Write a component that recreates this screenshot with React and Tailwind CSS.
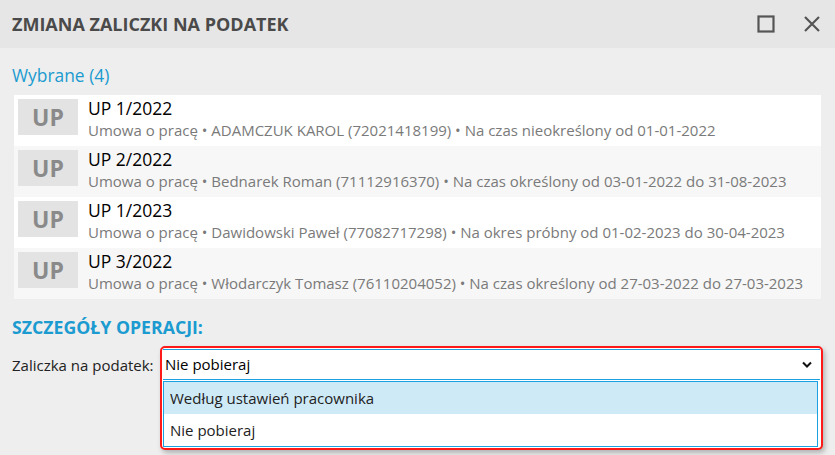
import React from "react";

const rows = [
  { t: "UP 1/2022", s: "Umowa o pracę • ADAMCZUK KAROL (72021418199) • Na czas nieokreślony od 01-01-2022", bg: "bg-white" },
  { t: "UP 2/2022", s: "Umowa o pracę • Bednarek Roman (71112916370) • Na czas określony od 03-01-2022 do 31-08-2023", bg: "bg-[#f7f7f7]" },
  { t: "UP 1/2023", s: "Umowa o pracę • Dawidowski Paweł (77082717298) • Na okres próbny od 01-02-2023 do 30-04-2023", bg: "bg-white" },
  { t: "UP 3/2022", s: "Umowa o pracę • Włodarczyk Tomasz (76110204052) • Na czas określony od 27-03-2022 do 27-03-2023", bg: "bg-[#f7f7f7]" },
];

export default function App() {
  return (
    <div className="w-[835px] h-[455px] overflow-hidden bg-[#eeeeee] font-['Open_Sans',sans-serif] relative">
      <div className="h-[48px] bg-[#e6e6e6] flex items-center justify-between pl-[12px] pr-[14px]">
        <div className="text-[18px] font-bold text-[#4a4a4a] whitespace-nowrap">
          ZMIANA ZALICZKI NA PODATEK
        </div>
        <div className="flex items-center gap-[28px]">
          <svg width="18" height="18" viewBox="0 0 18 18"><rect x="1.5" y="1.5" width="15" height="15" fill="none" stroke="#555" strokeWidth="2.2" /></svg>
          <svg width="18" height="18" viewBox="0 0 18 18"><path d="M2 2 L16 16 M16 2 L2 16" stroke="#555" strokeWidth="2.2" /></svg>
        </div>
      </div>
      <div className="px-[12px] pt-[16px]">
        <div className="text-[17.4px] font-normal text-[#1b9bd0] leading-[22px] w-fit whitespace-nowrap">Wybrane (4)</div>
        <div className="mt-[9px] ml-[2px] w-[807px] flex flex-col">
          {rows.map((r, i) => (
            <div key={i} className={`${r.bg} h-[51px] flex items-start pl-[4px] pt-[4px]`}>
              <div className="w-[60px] h-[36px] bg-[#e3e3e3] flex items-center justify-center text-[23px] font-bold text-[#8a8a8a] shrink-0">UP</div>
              <div className="ml-[10px] flex flex-col">
                <div className="text-[17.5px] leading-[20px] text-black -mt-[1px]">{r.t}</div>
                <div className="text-[15px] leading-[20px] text-[#7a7a7a] mt-[2px] whitespace-nowrap">{r.s}</div>
              </div>
            </div>
          ))}
        </div>
        <div className="mt-[17px] text-[17.7px] font-bold text-[#1b9bd0] leading-[22px] whitespace-nowrap">SZCZEGÓŁY OPERACJI:</div>
        <div className="mt-[8px] flex items-start">
          <div className="text-[15px] text-[#222] leading-[20px] w-[148px] pt-[9px] whitespace-nowrap">Zaliczka na podatek:</div>
          <div className="w-[663px] h-[104px] border-2 border-[#ff1a1a] rounded-[5px] p-[1px] shadow-[2px_3px_5px_rgba(0,0,0,0.25)] bg-white flex flex-col">
            <div className="h-[31px] border-y border-[#1ba1e2] bg-white flex items-center justify-between pl-[2px] pr-[8px]">
              <span className="text-[15px] text-black">Nie pobieraj</span>
              <svg width="10" height="7" viewBox="0 0 10 7"><path d="M1 1.5 L5 5.5 L9 1.5" fill="none" stroke="#111" strokeWidth="2" /></svg>
            </div>
            <div className="flex-1 border border-[#1ba1e2] mt-[1px] mr-[2px] flex flex-col">
              <div className="h-[32px] bg-[#cfeaf7] flex items-center pl-[6px] text-[15px] text-[#222]">Według ustawień pracownika</div>
              <div className="flex-1 bg-white flex items-center pl-[6px] text-[15px] text-[#222]">Nie pobieraj</div>
            </div>
          </div>
        </div>
      </div>
    </div>
  );
}
